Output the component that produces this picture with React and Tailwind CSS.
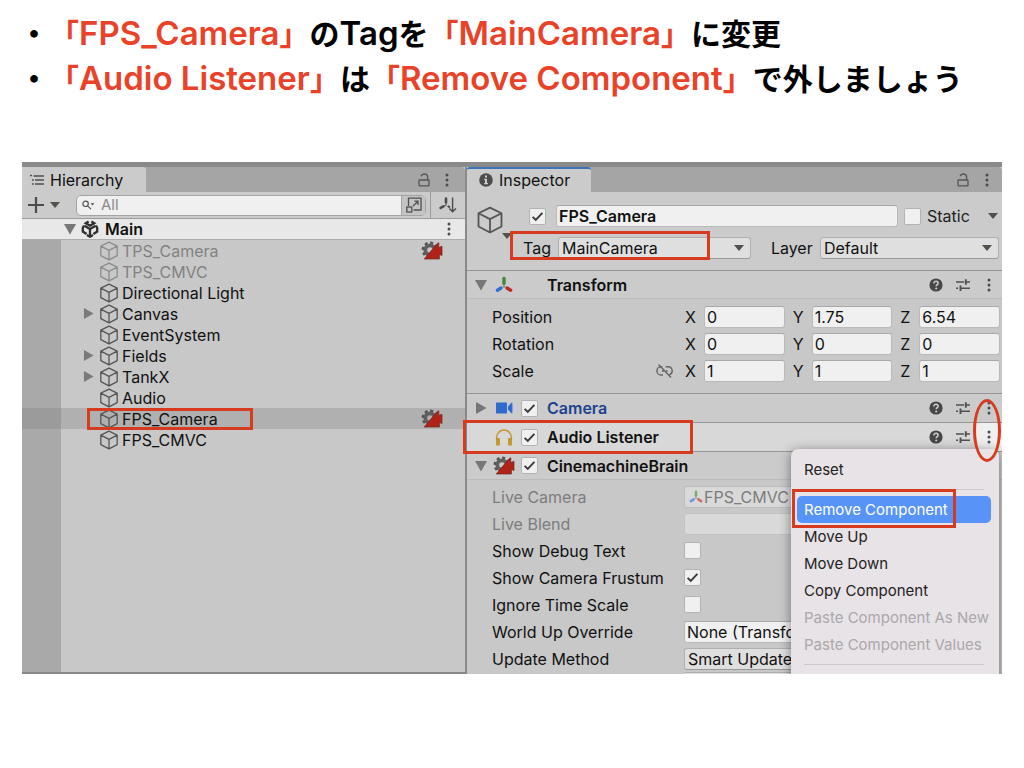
import React, { useId } from "react";
import clsx from "clsx";

const hierarchyItems = [
  { name: "TPS_Camera", inactive: true, brain: true },
  { name: "TPS_CMVC", inactive: true },
  { name: "Directional Light" },
  { name: "Canvas", children: true },
  { name: "EventSystem" },
  { name: "Fields", children: true },
  { name: "TankX", children: true },
  { name: "Audio" },
  { name: "FPS_Camera", selected: true, brain: true, marked: true },
  { name: "FPS_CMVC" },
];

const transformRows = [
  { label: "Position", values: ["0", "1.75", "6.54"] },
  { label: "Rotation", values: ["0", "0", "0"] },
  { label: "Scale", values: ["1", "1", "1"], linked: true },
];

/* ---------- icons ---------- */

const CubeIcon = ({ className }) => (
  <svg viewBox="0 0 20 20" className={className} fill="none" stroke="currentColor" strokeWidth="1.3" strokeLinejoin="round">
    <path d="M10 1.2 18.2 5.2V14.6L10 18.9 1.8 14.6V5.2ZM1.8 5.2 10 9.4 18.2 5.2M10 9.4V18.9" />
  </svg>
);

const Triangle = ({ open, className }) => (
  <svg viewBox="0 0 12 12" className={className} fill="currentColor">
    <path d={open ? "M0 1H12L6 11.5Z" : "M1 0 11.5 6 1 12Z"} />
  </svg>
);

const Caret = ({ className }) => (
  <svg viewBox="0 0 10 6" className={className} fill="#50534c">
    <path d="M0 0H10L5 6Z" />
  </svg>
);

const Dots = () => (
  <svg viewBox="0 0 4 14" className="h-[14px] w-1" fill="#4c4c4c">
    <circle cx="2" cy="2" r="1.5" />
    <circle cx="2" cy="7" r="1.5" />
    <circle cx="2" cy="12" r="1.5" />
  </svg>
);

const LockIcon = () => (
  <svg viewBox="0 0 12 14" className="h-[14px] w-3" fill="none" stroke="#555" strokeWidth="1.3">
    <rect x="1" y="7" width="10" height="5.8" rx=".6" />
    <path d="M3 3.2C3.6 1.6 4.8 1 6.2 1 8.4 1 9.6 2.2 9.6 4V7" />
  </svg>
);

const ListIcon = () => (
  <svg viewBox="0 0 14 12" className="h-3 w-[14px]" fill="none" stroke="#4f4f4f" strokeWidth="1.3">
    <path d="M3.5 2H14M5 6H14M5 10H14M0 1.5H2M2 6H3.8M2 10H3.8" />
  </svg>
);

const InfoIcon = () => (
  <svg viewBox="0 0 14 14" className="size-[14px]">
    <circle cx="7" cy="7" r="6.8" fill="#4d4d4d" />
    <path d="M6 2.6H8V4.5H6ZM5.2 5.8H8V10H9V11.2H5V10H6V7H5.2Z" fill="#cbcbcb" />
  </svg>
);

const UnityIcon = () => (
  <svg viewBox="0 0 18 18" className="size-[18px]" fill="none" stroke="#2f2f2f" strokeWidth="2.3">
    <path d="M9 9V15.6M9 9 3.4 5.8M9 9 14.6 5.8" />
    <path d="M7.6 1.6 4.8 3.2 9 5.7 13.2 3.2 10.4 1.6M1.8 7.2V11.6L5.6 13.9M16.2 7.2V11.6L12.4 13.9M6 15 9 16.8 12 15M1.8 8 3 5.4M16.2 8 15 5.4" />
  </svg>
);

const SearchIcon = () => (
  <svg viewBox="0 0 13 10" className="h-[10px] w-[13px]" fill="none" stroke="#555" strokeWidth="1.2">
    <circle cx="3.6" cy="3.8" r="2.7" />
    <path d="M5.6 5.8 9 9.2" />
    <path d="M8.5 3.2H12.5L10.5 5.4Z" fill="#555" stroke="none" />
  </svg>
);

const PickerIcon = () => (
  <svg viewBox="0 0 16 16" className="size-4" fill="none" stroke="#505050" strokeWidth="1.3">
    <path d="M2.5 9V1.2H15V13H7.5" />
    <rect x=".8" y="10" width="5" height="5" />
    <path d="M7 9 11.8 4.6M8.3 4.2H12V8" />
  </svg>
);

const SortIcon = () => (
  <svg viewBox="0 0 18 16" className="h-4 w-[18px]" fill="none" stroke="#4b4b4b">
    <path d="M7 1.5V5.5M4.4 9.4 1.6 10.8" strokeWidth="2.6" strokeLinecap="round" />
    <path d="M7 6.5V8.4L5.4 9" strokeWidth="1" />
    <path d="M8.6 9 11 10.4" strokeWidth="2" />
    <path d="M13.6 .5V14.5M10.4 11.4 13.6 14.8 17 11.4" strokeWidth="1.4" />
  </svg>
);

const HelpIcon = () => (
  <svg viewBox="0 0 14 14" className="size-[14px]">
    <circle cx="7" cy="7" r="6.6" fill="#474747" />
    <path d="M4.9 5.4C4.9 4 5.8 3.3 7 3.3S9.1 4 9.1 5.2C9.1 6.6 7.2 6.6 7.2 8.3" fill="none" stroke="#d0d0d0" strokeWidth="1.5" />
    <circle cx="7.2" cy="10.4" r="1" fill="#d0d0d0" />
  </svg>
);

const PresetIcon = () => (
  <svg viewBox="0 0 14 12" className="h-3 w-[14px]" fill="none" stroke="#505050">
    <path d="M0 3H8M10 3H14M0 9.2H2M4.5 9.2H14" strokeWidth="1.5" />
    <path d="M9.8 .2V5.8M4.5 6.4V12" strokeWidth="1.9" />
  </svg>
);

const AxesIcon = ({ className }) => (
  <svg viewBox="0 0 18 18" className={className} fill="none" strokeWidth="3.4" strokeLinecap="round">
    <path d="M9 2.5V7.5" stroke="#3f8a35" />
    <path d="M6 12 2.4 14.2" stroke="#2f6fd6" />
    <path d="M12 12 15.6 14.2" stroke="#bd2a20" />
    <path d="M9 8V10.6M9 10.6 7 11.8M9 10.6 11 11.8" stroke="#7c7c7c" strokeWidth="1" />
  </svg>
);

const VideoIcon = () => (
  <svg viewBox="0 0 17 12" className="h-3 w-[17px]" fill="#2f6bcd">
    <rect x="0" y=".5" width="11" height="11" rx=".8" />
    <path d="M12 4.5 15.4 .8H16.4V11.2H15.4L12 7.5Z" />
  </svg>
);

const HeadphonesIcon = () => (
  <svg viewBox="0 0 18 17" className="h-[17px] w-[18px]" fill="none" stroke="#c4962a">
    <path d="M1.6 11V8.4A7.4 7.4 0 0 1 16.4 8.4V11" strokeWidth="1.4" />
    <path d="M3 9V16.4M15 9V16.4" strokeWidth="3.8" />
  </svg>
);

const BrainIcon = () => (
  <svg viewBox="0 0 22 19" className="h-[19px] w-[22px]">
    <circle cx="9" cy="9" r="6.9" fill="none" stroke="#505050" strokeWidth="3" strokeDasharray="2.8 2.62" />
    <circle cx="9" cy="9" r="4.7" fill="none" stroke="#5f5f5f" strokeWidth="3.8" />
    <path d="M3.2 18 16.2 2.6 17.8 1.8V6.6L21 5.2V14.6L18.4 13.4V18Z" fill="#b02217" stroke="#6e2a20" strokeWidth=".7" />
  </svg>
);

const UnlinkIcon = () => (
  <svg viewBox="0 0 17 14" className="h-[14px] w-[17px]" fill="none" stroke="#666" strokeWidth="1.4">
    <path d="M6.4 2.8H5A4 4 0 0 0 5 11H7M9.6 2.8H12A4 4 0 0 1 13.4 10.6M2.6 .6 15 13.4M6 7H8M10 7H11.6" />
  </svg>
);

/* ---------- controls ---------- */

const Frame = ({ className }) => (
  <span className={clsx("pointer-events-none absolute z-20 border-[3px] border-[#d63b1f]", className)} />
);

const Checkbox = ({ className, ...props }) => (
  <span className={clsx("relative block size-[17px] shrink-0", className)}>
    <input
      type="checkbox"
      className="peer block size-[17px] appearance-none rounded-[2px] border border-[#b3b3b3] bg-[#f0f0f0]"
      {...props}
    />
    <svg
      viewBox="0 0 17 17"
      className="pointer-events-none absolute inset-0 hidden peer-checked:block"
      fill="none"
      stroke="#3a3a3a"
      strokeWidth="1.9"
    >
      <path d="M3.6 8.8 6.8 12 13.4 4.8" />
    </svg>
  </span>
);

const Dropdown = ({ value, className, ...props }) => (
  <span className={clsx("relative block min-w-0", className)}>
    <select
      className="block h-[22px] w-full appearance-none rounded-[3px] border border-[#b0b0b0] border-b-[#999] bg-[#dfdfdf] pl-[3px] text-base leading-5"
      {...props}
    >
      <option>{value}</option>
    </select>
    <Caret className="pointer-events-none absolute top-2 right-[7px] h-[6px] w-[10px]" />
  </span>
);

const fieldClasses = "block h-[22px] w-full min-w-0 rounded-[3px] border border-[#bababa] border-t-[#a8a8a8] bg-[#f0f0f0] pl-[2px] text-base leading-5";

const TabBar = ({ title, icon, active }) => (
  <div className="flex h-[25px] items-stretch justify-between rounded-t-[4px] bg-[#a5a5a5]">
    <button
      className={clsx(
        "flex w-[124px] items-center gap-[6px] rounded-t-[3px] border-t-2 bg-[#cbcbcb] pb-px text-base",
        active ? "border-[#3f73b9] pl-3" : "border-[#cbcbcb] pl-2"
      )}
    >
      {icon}
      {title}
    </button>
    <div className={clsx("flex items-center", active ? "gap-4 pr-[13px]" : "gap-[15px] pr-4")}>
      <button aria-label="Lock"><LockIcon /></button>
      <button aria-label="Tab menu"><Dots /></button>
    </div>
  </div>
);

const ComponentHeader = ({ title, icon, open, foldable = true, toggle = true, titleClass, className, menuActive, children }) => (
  <div className={clsx("relative flex h-[29px] items-center border-t border-[#959595]", className)}>
    <span className="flex w-[26px] justify-center pl-[2px] text-[#777]">
      {foldable && <Triangle open={open} className="size-3" />}
    </span>
    <span className="flex w-[22px] justify-center">{icon}</span>
    <span className="ml-[6px] w-[17px]">{toggle && <Checkbox defaultChecked aria-label={title} />}</span>
    <h3 className={clsx("ml-[9px] flex-1 text-base font-semibold", titleClass)}>{title}</h3>
    <button aria-label="Help" className="flex w-[27px] justify-center"><HelpIcon /></button>
    <button aria-label="Presets" className="flex w-[27px] justify-center"><PresetIcon /></button>
    <button
      aria-label="More"
      className={clsx("flex w-[26px] items-center justify-center self-stretch", menuActive && "bg-[#efefef]")}
    >
      <Dots />
    </button>
    {children}
  </div>
);

const PropertyRow = ({ label, muted, render }) => {
  const id = useId();
  return (
    <div className="flex h-[27px] items-center pr-[3px] pl-[25px]">
      <label htmlFor={id} className={clsx("w-48 shrink-0", muted && "text-[#7d7d7d]")}>
        {label}
      </label>
      {render(id)}
    </div>
  );
};

const MenuItem = ({ children, disabled, highlighted }) => (
  <button
    disabled={disabled}
    className={clsx(
      "relative block h-[27px] w-full rounded-[5px] pl-[7px] text-left whitespace-nowrap",
      disabled && "text-[#aba7aa]",
      highlighted && "bg-[#5893f7] text-white"
    )}
  >
    {children}
    {highlighted && <Frame className="-top-[7px] -left-[5px] h-[39px] w-[164px]" />}
  </button>
);

const MenuSeparator = () => (
  <div className="flex h-[13px] items-center px-[7px]">
    <div className="h-px flex-1 bg-[#cbc7ca]" />
  </div>
);

const ContextMenu = () => (
  <div className="absolute top-[26px] right-[3px] z-10 w-[208px] rounded-t-[7px] bg-[#e8e3e7] pt-[7px] pr-2 pb-6 pl-[6px] text-[15px] text-[#222] shadow-[0_2px_12px_rgba(0,0,0,0.45)]">
    <MenuItem>Reset</MenuItem>
    <MenuSeparator />
    <MenuItem highlighted>Remove Component</MenuItem>
    <MenuItem>Move Up</MenuItem>
    <MenuItem>Move Down</MenuItem>
    <MenuItem>Copy Component</MenuItem>
    <MenuItem disabled>Paste Component As New</MenuItem>
    <MenuItem disabled>Paste Component Values</MenuItem>
    <MenuSeparator />
  </div>
);

/* ---------- panels ---------- */

const HierarchyRow = ({ item }) => (
  <li className={clsx("flex h-[21px]", item.selected && "bg-[#b0b0b0]")}>
    <span className={clsx("w-[39px] shrink-0", item.selected ? "bg-[#9b9b9b]" : "bg-[#a9a9a9]")} />
    <div className="relative flex flex-1 items-center pr-[22px] pl-[22px]">
      <span className="w-4 text-[#7a7a7a]">{item.children && <Triangle className="size-[11px]" />}</span>
      <CubeIcon className={clsx("size-5", item.inactive ? "text-[#8c8c8c]" : "text-[#555]")} />
      <span className={clsx("ml-[3px] flex-1", item.inactive && "text-[#828282]")}>{item.name}</span>
      {item.brain && <BrainIcon />}
      {item.marked && <Frame className="top-0 left-[26px] h-[22px] w-[166px]" />}
    </div>
  </li>
);

const Hierarchy = () => (
  <section className="mb-[2px] flex min-w-0 flex-col bg-[#c8c8c8]">
    <TabBar title="Hierarchy" icon={<ListIcon />} />
    <div className="flex h-[27px] items-center border-b border-[#9c9c9c] bg-[#cbcbcb] pl-[6px]">
      <button aria-label="Create" className="flex w-12 items-center gap-[6px]">
        <svg viewBox="0 0 16 16" className="size-4" stroke="#4b4b4b" strokeWidth="2.2">
          <path d="M8 0V16M0 8H16" />
        </svg>
        <Caret className="h-[6px] w-[10px]" />
      </button>
      <div className="flex h-[21px] flex-1 items-stretch overflow-hidden rounded-[5px] border border-[#a3a3a3] bg-[#f0f0f0]">
        <label htmlFor="hierarchy-search" aria-label="Search" className="flex items-center pl-[5px]">
          <SearchIcon />
        </label>
        <input id="hierarchy-search" type="text" placeholder="All" className="min-w-0 flex-1 pl-[6px] text-[15px] placeholder:text-[#8b8b8b]" />
        <button aria-label="Pick" className="flex w-6 items-center justify-center border-l border-[#a3a3a3] bg-[#c4c4c4]">
          <PickerIcon />
        </button>
      </div>
      <button aria-label="Sort" className="ml-1 flex w-[35px] items-center justify-center self-stretch border-l border-[#9c9c9c]">
        <SortIcon />
      </button>
    </div>
    <div className="flex h-[21px] items-center border-b border-[#adadad] bg-[#e8e8e8] pr-[14px] pl-[42px]">
      <Triangle open className="size-3 text-[#777]" />
      <span className="ml-[5px]"><UnityIcon /></span>
      <h2 className="ml-[6px] flex-1 font-semibold">Main</h2>
      <button aria-label="Scene menu"><Dots /></button>
    </div>
    <ul>
      {hierarchyItems.map((item) => (
        <HierarchyRow key={item.name} item={item} />
      ))}
    </ul>
    <div className="w-[39px] flex-1 bg-[#a9a9a9]" />
  </section>
);

const ObjectHeader = () => (
  <div className="flex bg-[#cbcbcb] pt-[13px] pb-[11px]">
    <div className="flex w-14 shrink-0 items-start pt-px pl-[9px]">
      <CubeIcon className="size-7 text-[#555]" />
      <Caret className="mt-[27px] -ml-[2px] h-[6px] w-[10px]" />
    </div>
    <div className="flex flex-1 flex-col gap-[10px]">
      <div className="flex items-center pl-[6px]">
        <Checkbox defaultChecked aria-label="Active" />
        <input
          aria-label="Name"
          defaultValue="FPS_Camera"
          className="mr-[6px] ml-[10px] h-[22px] min-w-0 flex-1 rounded-[3px] border border-[#bababa] border-t-[#a8a8a8] bg-[#f0f0f0] pl-[2px] font-semibold"
        />
        <Checkbox id="static" />
        <label htmlFor="static" className="ml-[6px] w-[61px] text-[#222]">Static</label>
        <button aria-label="Static options" className="pr-1"><Caret className="h-[6px] w-[10px]" /></button>
      </div>
      <div className="relative flex items-center pr-[3px]">
        <label htmlFor="tag" className="w-[35px]">Tag</label>
        <Dropdown id="tag" value="MainCamera" className="flex-14" />
        <label htmlFor="layer" className="ml-5 w-[49px]">Layer</label>
        <Dropdown id="layer" value="Default" className="flex-13" />
        <Frame className="-top-[6px] -left-[13px] h-[29px] w-[200px]" />
      </div>
    </div>
  </div>
);

const Inspector = () => (
  <section className="min-w-0 bg-[#c8c8c8]">
    <TabBar title="Inspector" icon={<InfoIcon />} active />
    <ObjectHeader />

    <ComponentHeader title="Transform" icon={<AxesIcon className="size-[18px]" />} open toggle={false} className="border-b border-b-[#bcbcbc] bg-[#cbcbcb]" />
    <div className="pt-1 pb-[9px]">
      {transformRows.map((row) => (
        <div key={row.label} className="flex h-[27px] items-center pr-[2px] pl-[25px]">
          <span className="flex w-[193px] shrink-0 items-center justify-between pr-3">
            {row.label}
            {row.linked && <UnlinkIcon />}
          </span>
          <div className="flex flex-1 gap-2">
            {["X", "Y", "Z"].map((axis, i) => (
              <label key={axis} className="flex flex-1 items-center">
                <span className="w-[19px] shrink-0">{axis}</span>
                <input defaultValue={row.values[i]} className={fieldClasses} />
              </label>
            ))}
          </div>
        </div>
      ))}
    </div>

    <ComponentHeader title="Camera" icon={<VideoIcon />} titleClass="text-[#1d4290]" className="bg-[#cbcbcb]" />
    <ComponentHeader title="Audio Listener" icon={<HeadphonesIcon />} foldable={false} className="bg-[#d8d8d8]" menuActive>
      <Frame className="-top-[3px] -left-1 h-[34px] w-[230px]" />
      <ContextMenu />
      <Frame className="-top-6 right-[1px] h-[63px] w-7 rounded-[50%]" />
    </ComponentHeader>
    <ComponentHeader title="CinemachineBrain" icon={<BrainIcon />} open className="border-b border-b-[#bcbcbc] bg-[#cbcbcb]" />

    <div className="pt-[3px]">
      <PropertyRow
        label="Live Camera"
        muted
        render={(id) => (
          <div className="flex h-[22px] flex-1 items-center rounded-[3px] border border-[#bdbdbd] bg-[#d9d9d9] pl-1">
            <AxesIcon className="size-[14px] shrink-0 opacity-60" />
            <input id={id} readOnly value="FPS_CMVC" className="min-w-0 flex-1 pl-px text-[#7d7d7d]" />
          </div>
        )}
      />
      <PropertyRow
        label="Live Blend"
        muted
        render={(id) => <input id={id} disabled className="h-[22px] min-w-0 flex-1 rounded-[3px] border border-[#c2c2c2] bg-[#d9d9d9]" />}
      />
      <PropertyRow label="Show Debug Text" render={(id) => <Checkbox id={id} />} />
      <PropertyRow label="Show Camera Frustum" render={(id) => <Checkbox id={id} defaultChecked />} />
      <PropertyRow label="Ignore Time Scale" render={(id) => <Checkbox id={id} />} />
      <PropertyRow label="World Up Override" render={(id) => <input id={id} defaultValue="None (Transform)" className={fieldClasses} />} />
      <PropertyRow label="Update Method" render={(id) => <Dropdown id={id} value="Smart Update" className="flex-1" />} />
      <div className="mr-[3px] ml-[217px] h-[2px] rounded-t-[3px] border-t border-[#b0b0b0] bg-[#dfdfdf]" />
    </div>
  </section>
);

const Note = ({ children }) => (
  <li className="flex">
    <span>・</span>
    <p>{children}</p>
  </li>
);

const Em = ({ children }) => <em className="text-[#ea4228] not-italic">「{children}」</em>;

// latin words are set a step larger than the kana around them
const Latin = ({ children }) => <span className="text-[33px] leading-none">{children}</span>;

const App = () => (
  <main className="min-h-screen bg-white font-['Inter','Noto_Sans_CJK_JP',sans-serif] text-base text-[#111]">
    <ul className="pt-3 pl-[19px] text-[30px] leading-[45px] font-semibold text-black">
      <Note>
        <Em><Latin>FPS_Camera</Latin></Em>の<Latin>Tag</Latin>を<Em><Latin>MainCamera</Latin></Em>に変更
      </Note>
      <Note>
        <Em><Latin>Audio Listener</Latin></Em>は<Em><Latin>Remove Component</Latin></Em>で外しましょう
      </Note>
    </ul>

    <div className="mx-[22px] mt-[60px] grid grid-cols-[443fr_535fr] gap-[2px] overflow-hidden bg-[#8a8a8a] pt-[5px] leading-5">
      <Hierarchy />
      <Inspector />
    </div>
  </main>
);

export default App;
